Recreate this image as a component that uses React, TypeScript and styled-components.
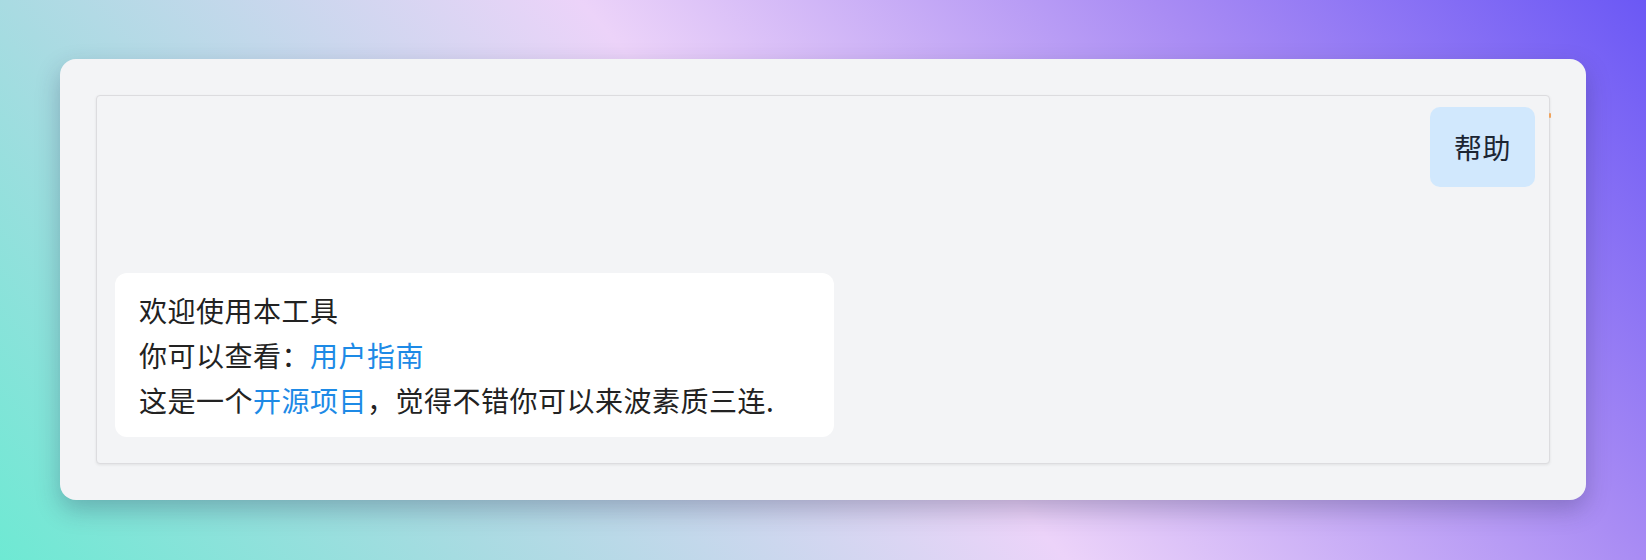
import React from 'react';
import styled, { createGlobalStyle } from 'styled-components';

const GlobalStyle = createGlobalStyle`
  html, body {
    margin: 0;
    padding: 0;
  }
  body {
    font-family: "Noto Sans CJK SC", "Noto Sans", sans-serif;
  }
`;

const Page = styled.div`
  width: 1646px;
  height: 560px;
  box-sizing: border-box;
  padding: 59px 60px 60px;
  background: linear-gradient(49deg, #6ee9d3 0%, #a9dbe2 23%, #ecd3f9 50%, #a98cf4 77%, #6b58f5 100%);
`;

const Card = styled.div`
  height: 441px;
  box-sizing: border-box;
  padding: 36px;
  background: #f3f4f6;
  border-radius: 16px;
  box-shadow: 0 10px 24px rgba(40, 40, 80, 0.28);
`;

const ChatPanel = styled.div`
  position: relative;
  height: 100%;
  box-sizing: border-box;
  border: 1px solid #dcdcdf;
  border-radius: 4px;
  background: #f3f4f6;
  box-shadow: 0 1px 3px rgba(0, 0, 0, 0.08);
  padding: 11px 14px 0 18px;
  display: flex;
  flex-direction: column;
`;

const EdgeMark = styled.span`
  position: absolute;
  right: -2px;
  top: 17px;
  width: 2px;
  height: 5px;
  background: #f0a35c;
  border-radius: 1px;
`;

const Row = styled.div<{ $mine?: boolean }>`
  display: flex;
  justify-content: ${p => (p.$mine ? 'flex-end' : 'flex-start')};
  margin-top: ${p => (p.$mine ? '0' : '86px')};
`;

const Bubble = styled.div<{ $mine?: boolean }>`
  box-sizing: border-box;
  font-size: 28px;
  line-height: 44.8px;
  letter-spacing: 0.5px;
  color: ${p => (p.$mine ? '#1c2533' : '#222')};
  background: ${p => (p.$mine ? '#d1e8fd' : '#ffffff')};
  border-radius: ${p => (p.$mine ? '10px' : '12px')};
  padding: ${p => (p.$mine ? '17.6px 24px' : '15px 24px')};
  width: ${p => (p.$mine ? 'auto' : '719px')};
`;

const Link = styled.a`
  color: #1d8ae6;
  text-decoration: none;
`;

export default function App() {
  return (
    <>
      <GlobalStyle />
      <Page>
        <Card>
          <ChatPanel>
            <EdgeMark />
            <Row $mine>
              <Bubble $mine>帮助</Bubble>
            </Row>
            <Row>
              <Bubble>
                <div>欢迎使用本工具</div>
                <div>
                  你可以查看：<Link href="#">用户指南</Link>
                </div>
                <div>
                  这是一个<Link href="#">开源项目</Link>，觉得不错你可以来波素质三连.
                </div>
              </Bubble>
            </Row>
          </ChatPanel>
        </Card>
      </Page>
    </>
  );
}
